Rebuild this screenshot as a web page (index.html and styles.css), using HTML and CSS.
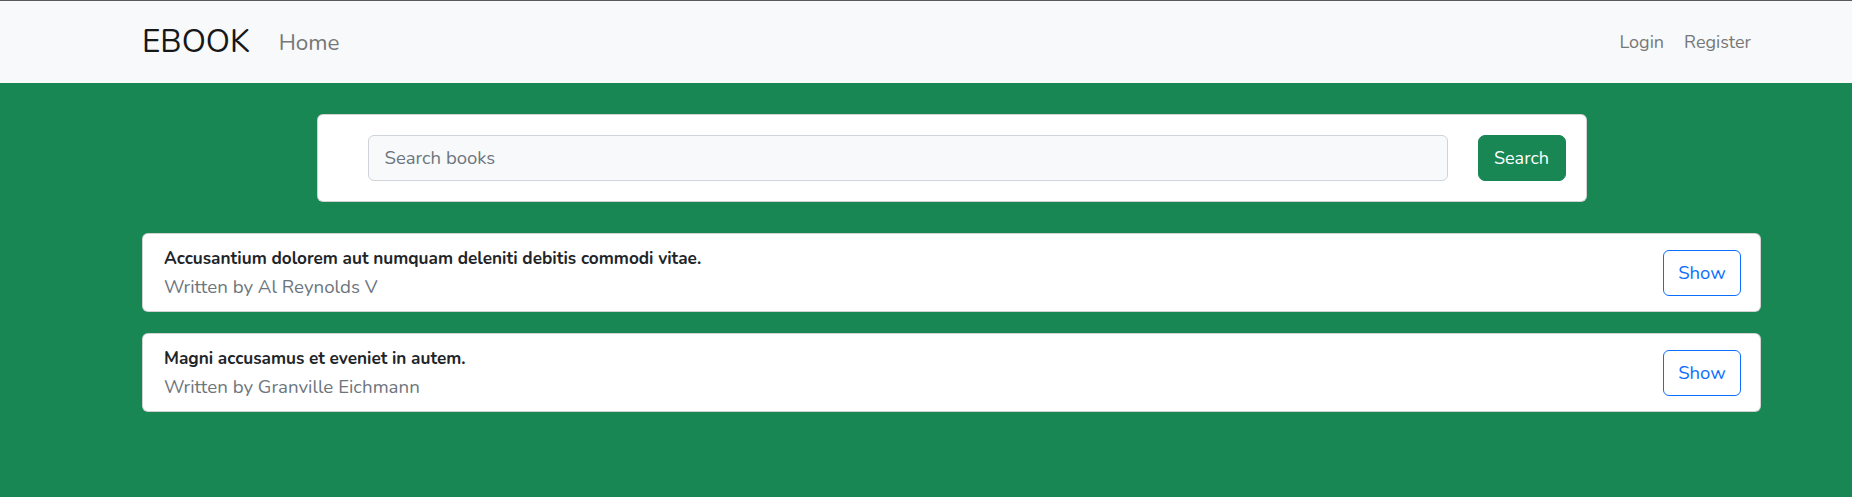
FILE: index.html
```html
<!DOCTYPE html>
<html lang="en">
<head>
<meta charset="utf-8">
<title>EBOOK</title>
<link rel="stylesheet" href="styles.css">
</head>
<body>
<header class="navbar">
  <div class="nav-inner">
    <a class="brand" href="#">EBOOK</a>
    <a class="nav-link nav-home" href="#">Home</a>
    <div class="nav-spacer"></div>
    <a class="nav-link nav-right" href="#">Login</a>
    <a class="nav-link nav-right" href="#">Register</a>
  </div>
</header>
<main class="main">
  <div class="wrap">
    <form class="search-card">
      <input class="search-input" type="text" placeholder="Search books">
      <button class="search-btn" type="button">Search</button>
    </form>
    <div class="book-card">
      <div class="book-text">
        <div class="book-title">Accusantium dolorem aut numquam deleniti debitis commodi vitae.</div>
        <div class="book-author">Written by Al Reynolds V</div>
      </div>
      <a class="show-btn" href="#">Show</a>
    </div>
    <div class="book-card">
      <div class="book-text">
        <div class="book-title">Magni accusamus et eveniet in autem.</div>
        <div class="book-author">Written by Granville Eichmann</div>
      </div>
      <a class="show-btn" href="#">Show</a>
    </div>
  </div>
</main>
</body>
</html>
```

FILE: styles.css
```css
* { box-sizing: border-box; }
html, body { margin: 0; padding: 0; }
body {
  font-family: "Nunito", "Lato", "Noto Sans", sans-serif;
  background: #198754;
  color: #212529;
  height: 497px;
  overflow: hidden;
}
a { text-decoration: none; }

.navbar {
  background: #f8f9fa;
  border-top: 1px solid #5a5a5a;
  height: 83px;
}
.nav-inner {
  width: 1619px;
  margin-left: 142px;
  height: 82px;
  display: flex;
  align-items: center;
}
.brand {
  font-size: 31.5px;
  line-height: 40px;
  color: #161718;
  margin-right: 21px;
}
.nav-link {
  color: #767777;
  padding: 0 10px;
}
.nav-home {
  font-size: 22.5px;
  padding-left: 8px;
}
.nav-spacer { flex: 1; }
.nav-right {
  font-size: 18px;
}

.main {
  background: #198754;
  padding-top: 31px;
}
.wrap {
  width: 1619px;
  margin-left: 142px;
}
.search-card {
  width: 1270px;
  margin: 0 auto 31px;
  background: #fff;
  border: 1px solid rgba(0,0,0,.175);
  border-radius: 6px;
  padding: 20px 20px 20px 50px;
  display: flex;
  gap: 30px;
}
.search-input {
  flex: 1;
  height: 46px;
  background: #f8f9fa;
  border: 1px solid #ced4da;
  border-radius: 6px;
  padding: 0 16px;
  font-family: inherit;
  font-size: 18.5px;
  color: #212529;
  outline: none;
}
.search-input::placeholder { color: #6c757d; }
.search-btn {
  width: 88px;
  height: 46px;
  background: #198754;
  color: #fff;
  border: 1px solid #198754;
  border-radius: 7px;
  font-family: inherit;
  font-size: 18px;
  padding: 0;
}

.book-card {
  background: #fff;
  border: 1px solid rgba(0,0,0,.175);
  border-radius: 6px;
  height: 79px;
  padding: 0 19px 0 21px;
  display: flex;
  align-items: center;
  margin-bottom: 21px;
}
.book-text { flex: 1; }
.book-title {
  font-size: 17.2px;
  font-weight: 700;
  line-height: 29px;
  color: #212529;
}
.book-author {
  font-size: 18.7px;
  line-height: 29px;
  color: #6c757d;
}
.show-btn {
  width: 78px;
  height: 46px;
  border: 1px solid #0d6efd;
  border-radius: 6px;
  color: #0d6efd;
  font-size: 18.5px;
  display: flex;
  align-items: center;
  justify-content: center;
}
```
